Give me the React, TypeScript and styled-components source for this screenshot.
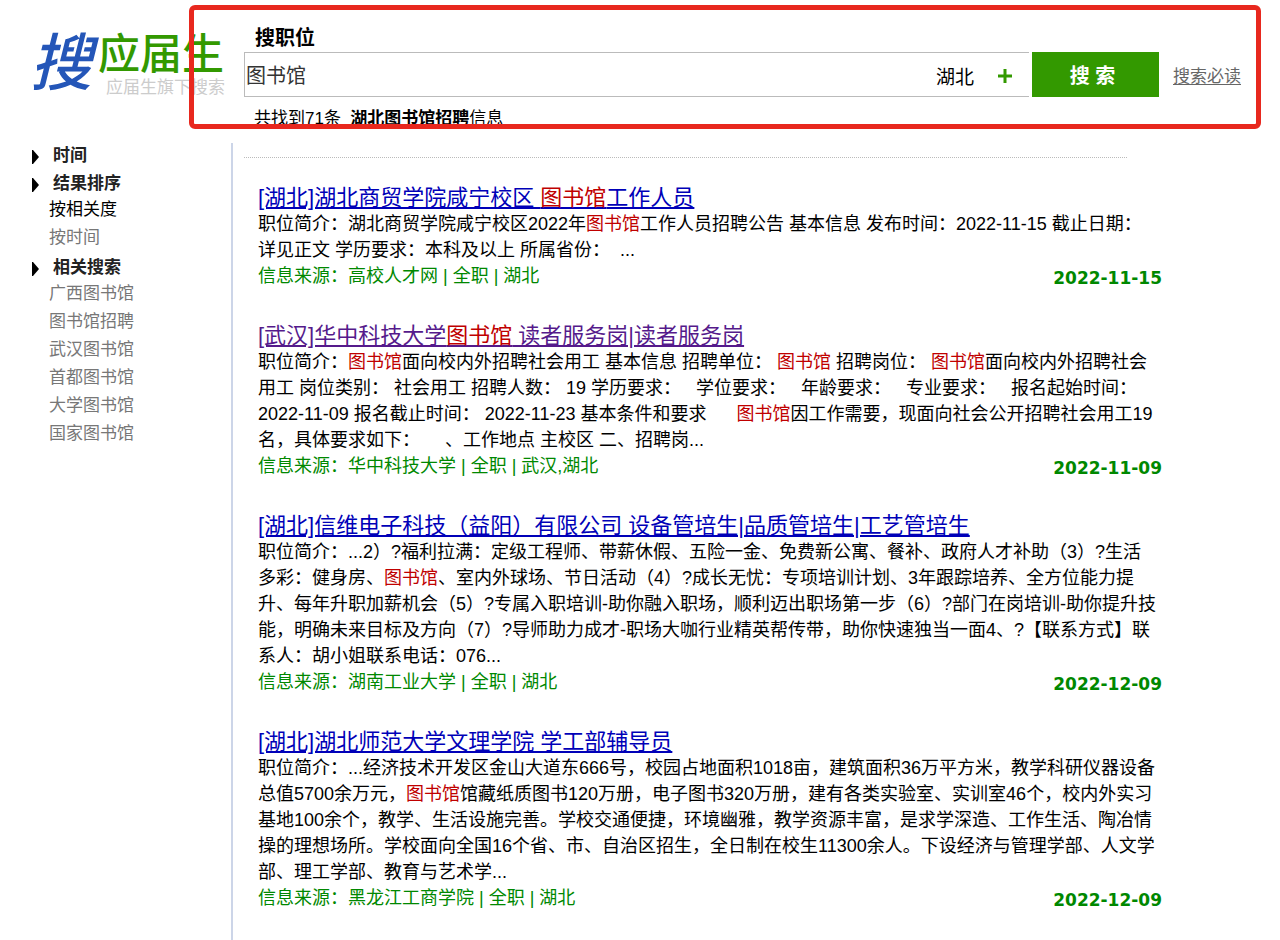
import React from "react";
import styled, { createGlobalStyle } from "styled-components";

const GlobalStyle = createGlobalStyle`
  *, *::before, *::after { box-sizing: border-box; }
  body {
    margin: 0;
    background: #fff;
    color: #000;
    font-family: "Liberation Sans", "Noto Sans CJK SC", sans-serif;
    font-size: 18px;
    text-spacing-trim: space-all;
  }
  a { text-underline-offset: 2px; }
`;

const Page = styled.div`
  position: relative;
  display: flex;
  flex-direction: column;
  min-height: 100vh;
`;

const Header = styled.header`
  display: flex;
  height: 143px;
  padding-right: 39px;
`;

const Logo = styled.a`
  display: flex;
  flex: none;
  width: 244px;
  padding: 32px 0 0 30px;
  text-decoration: none;
`;

const LogoMark = styled.span`
  width: 68px;
  color: #2456b8;
  font-size: 62px;
  font-style: italic;
  font-weight: 500;
  line-height: 64px;
`;

const LogoWords = styled.span`
  display: flex;
  flex-direction: column;
`;

const LogoName = styled.span`
  color: #390;
  font-size: 42px;
  font-weight: 500;
  line-height: 46px;
  white-space: nowrap;
`;

const LogoTagline = styled.span`
  padding-left: 8px;
  color: #ccc;
  font-size: 17px;
  line-height: 20px;
  white-space: nowrap;
`;

const SearchArea = styled.div`
  flex: 1;
  min-width: 0;
  padding-top: 24px;
`;

const SearchLabel = styled.label`
  display: block;
  padding-left: 11px;
  font-size: 20px;
  font-weight: 700;
  line-height: 28px;
`;

const SearchForm = styled.form`
  display: flex;
  align-items: center;
  height: 45px;
`;

const Field = styled.div`
  display: flex;
  flex: 1;
  align-items: center;
  min-width: 0;
  height: 45px;
  margin-right: 3px;
  padding-right: 16px;
  border: 1px solid #bbb;
  border-right: 0;
`;

const Keyword = styled.input`
  flex: 1;
  min-width: 0;
  height: 42px;
  padding: 0 1px;
  border: 0;
  outline: 0;
  background: transparent;
  color: #333;
  font-family: inherit;
  font-size: 20px;
`;

const CityButton = styled.button`
  display: flex;
  align-items: center;
  gap: 23px;
  padding: 2px 0 0;
  border: 0;
  background: none;
  color: #000;
  font-family: inherit;
  font-size: 19px;
`;

const SubmitButton = styled.button`
  width: 127px;
  height: 45px;
  margin-right: 14px;
  padding: 0 6px 0 0;
  border: 0;
  background: #390;
  color: #fff;
  font-family: inherit;
  font-size: 20px;
  font-weight: 700;
`;

const HelpLink = styled.a`
  color: #666;
  font-size: 17px;
  white-space: nowrap;
`;

const Summary = styled.p`
  margin: 10px 0 0;
  padding-left: 10px;
  font-size: 17px;
  line-height: 24px;
`;

const Marker = styled.div`
  position: absolute;
  top: 5px;
  right: 19px;
  left: 189px;
  height: 124px;
  border: 5px solid #e8281e;
  border-radius: 6px;
  pointer-events: none;
`;

const Columns = styled.div`
  display: flex;
  flex: 1;
`;

const Sidebar = styled.nav`
  flex: none;
  width: 231px;
  padding: 1px 0 0 32px;
`;

const GroupTitle = styled.h2<{ $first?: boolean }>`
  display: flex;
  align-items: center;
  gap: 14px;
  margin: ${(p) => (p.$first ? 0 : 4)}px 0 0;
  color: #222;
  font-size: 17px;
  line-height: 24px;

  svg { margin-top: 2px; }
`;

const GroupList = styled.ul`
  margin: 0;
  padding: 0 0 0 17px;
  list-style: none;
`;

const GroupLink = styled.a<{ $active?: boolean }>`
  display: block;
  color: ${(p) => (p.$active ? "#000" : "#777")};
  font-size: 17px;
  line-height: 28px;
  text-decoration: none;
`;

const Results = styled.main`
  flex: 1;
  min-width: 0;
  padding: 14px 118px 0 11px;
  border-left: 2px solid #ccd5e8;
`;

const Divider = styled.hr`
  margin: 0 35px 26px 0;
  border: 0;
  border-top: 1px dotted #bbb;
`;

const Result = styled.article`
  margin-bottom: 33px;
  padding-left: 14px;
`;

const ResultTitle = styled.h3`
  margin: 0;
  font-size: 22px;
  font-weight: 400;
  line-height: 27px;
`;

const ResultLink = styled.a<{ $visited?: boolean }>`
  color: ${(p) => (p.$visited ? "#551a8b" : "#0000b8")};
`;

const Highlight = styled.em`
  color: #c00000;
  font-style: normal;
`;

const Description = styled.p`
  margin: 0;
  line-height: 26px;
  white-space: pre-wrap;
`;

const Meta = styled.div`
  display: flex;
  justify-content: space-between;
  height: 26px;
  color: #080;
  line-height: 26px;
`;

const PostedOn = styled.time`
  padding-top: 4px;
  font-family: "DejaVu Sans", sans-serif;
  font-size: 17px;
  font-weight: 700;
  line-height: 22px;
`;

type Job = {
  title: string;
  visited?: boolean;
  lines: string[];
  source: string;
  date: string;
};

// Matches of the keyword are wrapped in asterisks.
const jobs: Job[] = [
  {
    title: "[湖北]湖北商贸学院咸宁校区 *图书馆*工作人员",
    lines: [
      "职位简介：湖北商贸学院咸宁校区2022年*图书馆*工作人员招聘公告 基本信息 发布时间：2022-11-15 截止日期：",
      "详见正文 学历要求：本科及以上 所属省份：  ...",
    ],
    source: "高校人才网 | 全职 | 湖北",
    date: "2022-11-15",
  },
  {
    title: "[武汉]华中科技大学*图书馆* 读者服务岗|读者服务岗",
    visited: true,
    lines: [
      "职位简介：*图书馆*面向校内外招聘社会用工 基本信息 招聘单位： *图书馆* 招聘岗位： *图书馆*面向校内外招聘社会",
      "用工 岗位类别： 社会用工 招聘人数： 19 学历要求：   学位要求：   年龄要求：   专业要求：   报名起始时间：",
      "2022-11-09 报名截止时间： 2022-11-23 基本条件和要求      *图书馆*因工作需要，现面向社会公开招聘社会用工19",
      "名，具体要求如下：     、工作地点 主校区 二、招聘岗...",
    ],
    source: "华中科技大学 | 全职 | 武汉,湖北",
    date: "2022-11-09",
  },
  {
    title: "[湖北]信维电子科技（益阳）有限公司 设备管培生|品质管培生|工艺管培生",
    lines: [
      "职位简介：...2）?福利拉满：定级工程师、带薪休假、五险一金、免费新公寓、餐补、政府人才补助（3）?生活",
      "多彩：健身房、*图书馆*、室内外球场、节日活动（4）?成长无忧：专项培训计划、3年跟踪培养、全方位能力提",
      "升、每年升职加薪机会（5）?专属入职培训-助你融入职场，顺利迈出职场第一步（6）?部门在岗培训-助你提升技",
      "能，明确未来目标及方向（7）?导师助力成才-职场大咖行业精英帮传带，助你快速独当一面4、?【联系方式】联",
      "系人：胡小姐联系电话：076...",
    ],
    source: "湖南工业大学 | 全职 | 湖北",
    date: "2022-12-09",
  },
  {
    title: "[湖北]湖北师范大学文理学院 学工部辅导员",
    lines: [
      "职位简介：...经济技术开发区金山大道东666号，校园占地面积1018亩，建筑面积36万平方米，教学科研仪器设备",
      "总值5700余万元，*图书馆*馆藏纸质图书120万册，电子图书320万册，建有各类实验室、实训室46个，校内外实习",
      "基地100余个，教学、生活设施完善。学校交通便捷，环境幽雅，教学资源丰富，是求学深造、工作生活、陶冶情",
      "操的理想场所。学校面向全国16个省、市、自治区招生，全日制在校生11300余人。下设经济与管理学部、人文学",
      "部、理工学部、教育与艺术学...",
    ],
    source: "黑龙江工商学院 | 全职 | 湖北",
    date: "2022-12-09",
  },
];

const related = ["广西图书馆", "图书馆招聘", "武汉图书馆", "首都图书馆", "大学图书馆", "国家图书馆"];

const marked = (text: string) =>
  text.split("*").map((part, i) => (i % 2 ? <Highlight key={i}>{part}</Highlight> : part));

const Arrow = () => (
  <svg width="7" height="14" viewBox="0 0 7 14" aria-hidden="true">
    <path d="M0 0h1l6 7-6 7H0z" fill="#000" />
  </svg>
);

const Plus = () => (
  <svg width="16" height="16" viewBox="0 0 16 16" aria-hidden="true">
    <path d="M8 1v14M1 8h14" stroke="#390" strokeWidth="3" fill="none" />
  </svg>
);

export default function App() {
  return (
    <Page lang="zh-CN">
      <GlobalStyle />
      <Header>
        <Logo href="#">
          <LogoMark>搜</LogoMark>
          <LogoWords>
            <LogoName>应届生</LogoName>
            <LogoTagline>应届生旗下搜索</LogoTagline>
          </LogoWords>
        </Logo>
        <SearchArea>
          <SearchLabel htmlFor="keyword">搜职位</SearchLabel>
          <SearchForm onSubmit={(e) => e.preventDefault()}>
            <Field>
              <Keyword id="keyword" type="text" defaultValue="图书馆" />
              <CityButton type="button">
                湖北
                <Plus />
              </CityButton>
            </Field>
            <SubmitButton type="submit">搜 索</SubmitButton>
            <HelpLink href="#">搜索必读</HelpLink>
          </SearchForm>
          <Summary>
            共找到71条&nbsp; <b>湖北图书馆招聘</b>信息
          </Summary>
        </SearchArea>
      </Header>
      <Columns>
        <Sidebar>
          <GroupTitle $first>
            <Arrow />
            时间
          </GroupTitle>
          <GroupTitle>
            <Arrow />
            结果排序
          </GroupTitle>
          <GroupList>
            <li><GroupLink href="#" $active>按相关度</GroupLink></li>
            <li><GroupLink href="#">按时间</GroupLink></li>
          </GroupList>
          <GroupTitle>
            <Arrow />
            相关搜索
          </GroupTitle>
          <GroupList>
            {related.map((name) => (
              <li key={name}><GroupLink href="#">{name}</GroupLink></li>
            ))}
          </GroupList>
        </Sidebar>
        <Results>
          <Divider />
          {jobs.map((job) => (
            <Result key={job.title}>
              <ResultTitle>
                <ResultLink href="#" $visited={job.visited}>{marked(job.title)}</ResultLink>
              </ResultTitle>
              <Description>{marked(job.lines.join("\n"))}</Description>
              <Meta>
                <span>信息来源：{job.source}</span>
                <PostedOn>{job.date}</PostedOn>
              </Meta>
            </Result>
          ))}
        </Results>
      </Columns>
      <Marker />
    </Page>
  );
}
